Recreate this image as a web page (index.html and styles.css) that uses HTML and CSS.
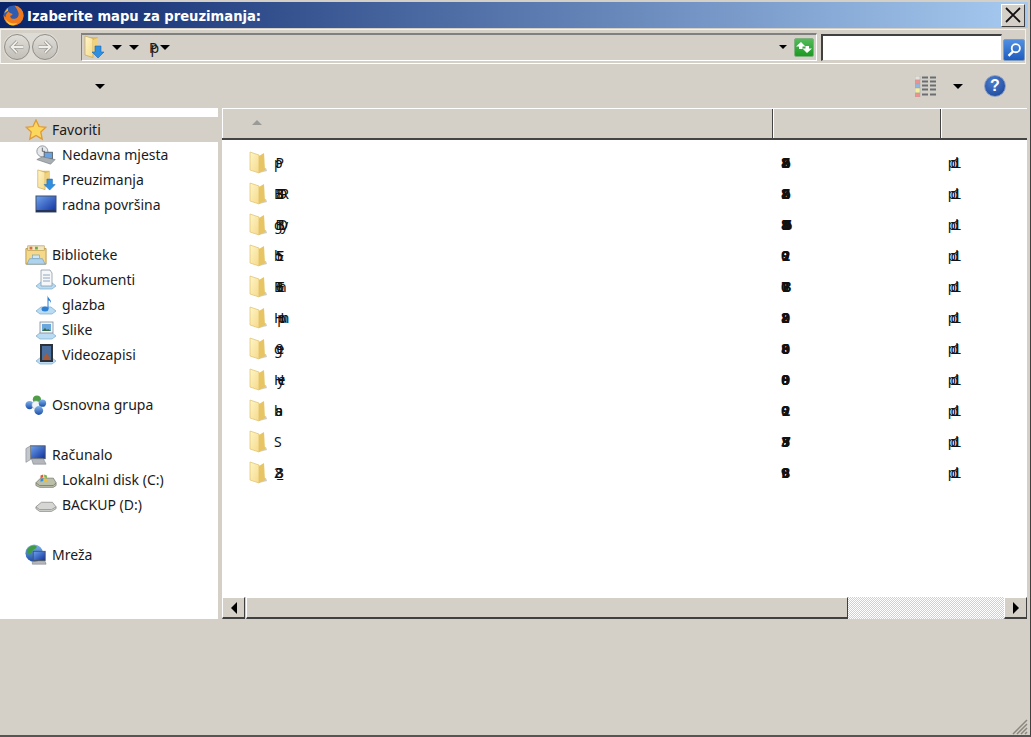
FILE: index.html
```html
<!DOCTYPE html>
<html lang="hr">
<head>
    <meta charset="UTF-8">
    <title>Izaberite mapu za preuzimanja:</title>
    <link rel="stylesheet" href="styles.css">
</head>
<body>
    <svg class="icon-defs" width="0" height="0">
        <defs>
            <linearGradient id="folderFront" x1="0" y1="0" x2="1" y2="1">
                <stop offset="0" stop-color="#fff6c8"/>
                <stop offset="1" stop-color="#f5d98a"/>
            </linearGradient>
            <linearGradient id="blueScreen" x1="0" y1="0" x2="1" y2="1">
                <stop offset="0" stop-color="#6fa4ee"/>
                <stop offset="1" stop-color="#0f2f9c"/>
            </linearGradient>
            <linearGradient id="sphereBlue" x1="0" y1="0" x2="0" y2="1">
                <stop offset="0" stop-color="#7fb4ec"/>
                <stop offset="1" stop-color="#1d4fa8"/>
            </linearGradient>
            <symbol id="folder" viewBox="0 0 20 24">
                <path d="M10 22l8-2-1-3-7 1z" fill="#b9b6ad" opacity=".7"/>
                <path d="M10 5l5-3 1 17-6 3z" fill="#e8c564"/>
                <path d="M1 1l9 3v18l-9-3z" fill="url(#folderFront)" stroke="#e0c06a" stroke-width=".7"/>
            </symbol>
            <symbol id="folderDown" viewBox="0 0 22 24">
                <path d="M4 2l11 0v16l-11 3z" fill="#e2bd5c"/>
                <path d="M2 1l8 2.500v19l-8-2.500z" fill="url(#folderFront)" stroke="#c9a650" stroke-width=".7"/>
                <path d="M10 5l5-2v14l-5 2z" fill="#f0d27e"/>
                <path d="M12 11h6v6h3l-6 6-6-6h3z" fill="#2f8fe0" stroke="#1c68b4" stroke-width=".6"/>
            </symbol>
            <symbol id="star" viewBox="0 0 24 24">
                <path d="M12 1l3.300 7.200 7.500.8-5.600 5.100 1.600 7.900-6.800-4-6.800 4 1.600-7.900-5.600-5.100 7.500-.8z" fill="#fbd75e" stroke="#e09a34" stroke-width="1.400"/>
            </symbol>
            <symbol id="recent" viewBox="0 0 24 22">
                <circle cx="8" cy="7" r="6" fill="#e6e8ea" stroke="#8d949b"/>
                <path d="M8 3v4h3" fill="none" stroke="#5b6168"/>
                <rect x="10" y="8" width="9" height="7" fill="#6aa3e2" stroke="#58606a"/>
                <path d="M2 16l6-3 14 3-5 5z" fill="#a9aeb3" stroke="#6e7378" stroke-width=".6"/>
            </symbol>
            <symbol id="desktop" viewBox="0 0 22 20">
                <rect x="1" y="1" width="20" height="16" fill="url(#blueScreen)" stroke="#3c5070"/>
                <rect x="1" y="15" width="20" height="2" fill="#27345a"/>
            </symbol>
            <symbol id="library" viewBox="0 0 24 22">
                <path d="M1 4h22v17h-22z" fill="#f5d989" stroke="#b7964a"/>
                <rect x="3" y="1" width="18" height="5" fill="#f0e6c0" stroke="#b7964a" stroke-width=".7"/>
                <rect x="5" y="2" width="3" height="3" fill="#d86a4a"/>
                <rect x="11" y="2" width="3" height="3" fill="#69a84f"/>
                <path d="M5 15h14l3 6h-20z" fill="#aed3ef" stroke="#6f9dc0" stroke-width=".7"/>
                <rect x="8" y="11" width="8" height="4" fill="#cfe6f7" stroke="#6f9dc0" stroke-width=".7"/>
            </symbol>
            <symbol id="docLib" viewBox="0 0 22 22">
                <path d="M1 17l5-4h10l5 4-4 3h-12z" fill="#b9dcf3" stroke="#7aa9cc" stroke-width=".7"/>
                <path d="M6 1h9l2 3v13h-11z" fill="#f6f7f9" stroke="#8e99a6" stroke-width=".8"/>
                <path d="M8 6h7M8 9h7M8 12h7" stroke="#8fa6bf" stroke-width="1"/>
            </symbol>
            <symbol id="musicLib" viewBox="0 0 22 22">
                <path d="M1 17l5-4h10l5 4-4 3h-12z" fill="#b9dcf3" stroke="#7aa9cc" stroke-width=".7"/>
                <ellipse cx="10" cy="15" rx="3.500" ry="2.500" fill="#2d7fd2"/>
                <path d="M12.500 15v-14c0 3 4 4 3.500 8-1-2-2-2.500-2.500-2.500v8.500z" fill="#2d7fd2"/>
            </symbol>
            <symbol id="picLib" viewBox="0 0 22 22">
                <path d="M1 17l5-4h10l5 4-4 3h-12z" fill="#b9dcf3" stroke="#7aa9cc" stroke-width=".7"/>
                <rect x="5" y="3" width="13" height="11" fill="#f2f5f8" stroke="#7f8c99" stroke-width=".8"/>
                <rect x="7" y="5" width="9" height="7" fill="#6aa7dc"/>
                <path d="M7 12l3-3 2 2 1-1 3 2z" fill="#3a6a45"/>
            </symbol>
            <symbol id="videoLib" viewBox="0 0 22 22">
                <path d="M1 17l5-4h10l5 4-4 3h-12z" fill="#b9dcf3" stroke="#7aa9cc" stroke-width=".7"/>
                <rect x="5" y="0" width="13" height="18" fill="#2d3238"/>
                <rect x="7" y="2" width="9" height="14" fill="#4b6f9e"/>
                <path d="M7 16l4.500-7 4.500 7z" fill="#a65a3a"/>
            </symbol>
            <symbol id="homegroup" viewBox="0 0 24 22">
                <circle cx="13" cy="5" r="4.500" fill="#4f9e46"/>
                <circle cx="5" cy="11" r="4.500" fill="url(#sphereBlue)"/>
                <circle cx="12" cy="11" r="4.500" fill="#eef3f7" stroke="#9db4c7" stroke-width=".6"/>
                <circle cx="19" cy="9" r="4" fill="url(#sphereBlue)"/>
                <circle cx="15" cy="17" r="4.800" fill="url(#sphereBlue)"/>
            </symbol>
            <symbol id="computer" viewBox="0 0 24 22">
                <rect x="6" y="1" width="16" height="14" fill="url(#blueScreen)" stroke="#4a5460"/>
                <path d="M1 4l5-3v15l-5 3z" fill="#c3c7cc" stroke="#777d84" stroke-width=".6"/>
                <path d="M7 15h13l3 6h-14z" fill="#b4b8bd" stroke="#777d84" stroke-width=".6"/>
            </symbol>
            <symbol id="diskC" viewBox="0 0 24 20">
                <path d="M1 13l5-5h14l3 5v3l-3 2h-15l-4-2z" fill="#bcc0a8" stroke="#6f7368" stroke-width=".8"/>
                <path d="M1 13l4 3h15l3-3" fill="none" stroke="#6f7368" stroke-width=".8"/>
                <path d="M6 5l3-1v3l-3 1z" fill="#e4572e"/>
                <path d="M10 4l3 1v3l-3-1z" fill="#7ab648"/>
                <path d="M6 9l3-1v3l-3 1z" fill="#2f8fe0"/>
                <path d="M10 8l3 1v3l-3-1z" fill="#f3c130"/>
            </symbol>
            <symbol id="diskD" viewBox="0 0 24 20">
                <path d="M1 12l6-5h12l4 5v2l-5 3h-13l-4-3z" fill="#d6d7d5" stroke="#85877f" stroke-width=".8"/>
                <path d="M1 12l4 3h13l5-3" fill="none" stroke="#85877f" stroke-width=".8"/>
            </symbol>
            <symbol id="network" viewBox="0 0 24 24">
                <circle cx="10" cy="10" r="9.500" fill="url(#sphereBlue)"/>
                <path d="M4 4c3-3 7-3 9-1-1 3-4 2-5 5s-3 4-5 3c-2-2-1-5 1-7z" fill="#3f9c44"/>
                <rect x="9" y="8" width="13" height="10" fill="url(#blueScreen)" stroke="#4b5560"/>
                <path d="M8 19h14l1 3h-15z" fill="#b4b8bd" stroke="#777d84" stroke-width=".6"/>
            </symbol>
        </defs>
    </svg>

    <div class="dialog">
        <header class="title-bar">
            <svg class="app-icon" viewBox="0 0 22 22">
                <circle cx="11" cy="11" r="10.500" fill="#2f5cb0"/>
                <path d="M12 .6a10.500 10.500 0 1 1-11.400 10c.6 1.200 1.200 1.800 2.200 2.200-.2-2.600 1-4.600 3.400-6 0 1.200 1.200 1.800 3.400 2.400.8.800-.2 1.800-2 2.200 0 2.400 2.200 3.400 4.800 3 3-.6 4.600-3.200 3.800-6.200-.8-3-2.800-5.800-4.200-7.600z" fill="#f0791c"/>
                <path d="M2.500 14c2 5 8 6.500 12.500 4.500-1.500 2-4 2.900-6 2.700-3-.3-5.700-3-6.500-7.200z" fill="#f9c233"/>
                <path d="M1.500 9c.8-3 2.400-5 4-6 -.4 1.200-.4 2-.2 3-1.600 1-3 1.800-3.800 3z" fill="#f9b030"/>
            </svg>
            <span class="title-text">Izaberite mapu za preuzimanja:</span>
            <button class="close-btn">
                <svg viewBox="0 0 16 16" width="16" height="16"><path d="M1 1l14 14M15 1l-14 14" stroke="#111" stroke-width="1.800"/></svg>
            </button>
        </header>

        <div class="address-row">
            <div class="nav-buttons">
                <span class="round-btn">
                    <svg viewBox="0 0 26 26"><path d="M20 13h-12M13 7l-6 6 6 6" fill="none" stroke="#8e8c86" stroke-width="3.400"/><path d="M20 13h-12M13 7l-6 6 6 6" fill="none" stroke="#efeee9" stroke-width="2"/></svg>
                </span>
                <span class="round-btn">
                    <svg viewBox="0 0 26 26"><path d="M6 13h12M13 7l6 6-6 6" fill="none" stroke="#8e8c86" stroke-width="3.400"/><path d="M6 13h12M13 7l6 6-6 6" fill="none" stroke="#efeee9" stroke-width="2"/></svg>
                </span>
            </div>
            <div class="breadcrumb">
                <svg class="crumb-icon"><use href="#folderDown"/></svg>
                <span class="arrow crumb-arrow-first"></span>
                <span class="arrow crumb-arrow"></span>
                <span class="crumb-text">Pp</span>
                <span class="arrow crumb-arrow-last"></span>
                <span class="arrow arrow-small crumb-drop"></span>
                <span class="refresh-btn">
                    <svg viewBox="0 0 18 17" width="18" height="17">
                        <path d="M6 3l-5 4.500h3v2.500h3.500v-2.500h3z" fill="#fff"/>
                        <path d="M12 14l5-4.500h-3v-2.500h-3.500v2.500h-3z" fill="#fff"/>
                    </svg>
                </span>
            </div>
            <div class="search-box">
                <div class="search-input"></div>
                <span class="search-btn">
                    <svg viewBox="0 0 22 22" width="22" height="22">
                        <circle cx="13" cy="9" r="4.500" fill="none" stroke="#fff" stroke-width="2"/>
                        <path d="M10 12.500l-5 5" stroke="#fff" stroke-width="2.600"/>
                    </svg>
                </span>
            </div>
        </div>

        <div class="tool-row">
            <span class="arrow tool-arrow"></span>
            <span class="view-icon">
                <svg viewBox="0 0 22 21" width="22" height="21">
                    <rect x="0" y="0" width="5" height="4" fill="#e4e2dc" stroke="#a8a6a0" stroke-width=".5"/>
                    <rect x="0" y="4" width="5" height="4" fill="#ef8f8f" stroke="#a8a6a0" stroke-width=".5"/>
                    <rect x="0" y="8" width="5" height="4" fill="#8fb6e6" stroke="#a8a6a0" stroke-width=".5"/>
                    <rect x="0" y="12" width="5" height="5" fill="#f3ef9a" stroke="#a8a6a0" stroke-width=".5"/>
                    <rect x="0" y="17" width="5" height="4" fill="#ef8f8f" stroke="#a8a6a0" stroke-width=".5"/>
                    <path d="M7 1.500h6M15 1.500h6M7 5.500h6M15 5.500h6M7 9.500h6M15 9.500h6M7 13.500h6M15 13.500h6M7 18.500h6M15 18.500h6" stroke="#6a6e72" stroke-width="2"/>
                </svg>
            </span>
            <span class="arrow view-arrow"></span>
            <span class="help-btn">?</span>
        </div>

        <main class="main-area">
            <nav class="side-nav">
                <div class="nav-row nav-row-active"><svg class="nav-icon"><use href="#star"/></svg>Favoriti</div>
                <div class="nav-row nav-child"><svg class="nav-icon"><use href="#recent"/></svg>Nedavna mjesta</div>
                <div class="nav-row nav-child"><svg class="nav-icon"><use href="#folderDown"/></svg>Preuzimanja</div>
                <div class="nav-row nav-child"><svg class="nav-icon"><use href="#desktop"/></svg>radna površina</div>
                <div class="nav-row"></div>
                <div class="nav-row"><svg class="nav-icon"><use href="#library"/></svg>Biblioteke</div>
                <div class="nav-row nav-child"><svg class="nav-icon"><use href="#docLib"/></svg>Dokumenti</div>
                <div class="nav-row nav-child"><svg class="nav-icon"><use href="#musicLib"/></svg>glazba</div>
                <div class="nav-row nav-child"><svg class="nav-icon"><use href="#picLib"/></svg>Slike</div>
                <div class="nav-row nav-child"><svg class="nav-icon"><use href="#videoLib"/></svg>Videozapisi</div>
                <div class="nav-row"></div>
                <div class="nav-row"><svg class="nav-icon"><use href="#homegroup"/></svg>Osnovna grupa</div>
                <div class="nav-row"></div>
                <div class="nav-row"><svg class="nav-icon"><use href="#computer"/></svg>Računalo</div>
                <div class="nav-row nav-child"><svg class="nav-icon"><use href="#diskC"/></svg>Lokalni disk (C:)</div>
                <div class="nav-row nav-child"><svg class="nav-icon"><use href="#diskD"/></svg>BACKUP (D:)</div>
                <div class="nav-row"></div>
                <div class="nav-row"><svg class="nav-icon"><use href="#network"/></svg>Mreža</div>
            </nav>

            <section class="file-pane">
                <div class="file-head">
                    <div class="head-cell head-name"><span class="sort-mark"></span></div>
                    <div class="head-cell head-date"></div>
                    <div class="head-cell head-type"></div>
                </div>
                <div class="file-list">
                    <div class="file-row">
                        <svg class="file-icon"><use href="#folder"/></svg>
                        <span class="col-name">pP</span>
                        <span class="col-date">8206</span>
                        <span class="col-type">pd1</span>
                    </div>
                    <div class="file-row">
                        <svg class="file-icon"><use href="#folder"/></svg>
                        <span class="col-name">B8DR</span>
                        <span class="col-date">8206</span>
                        <span class="col-type">pd1</span>
                    </div>
                    <div class="file-row">
                        <svg class="file-icon"><use href="#folder"/></svg>
                        <span class="col-name">gBDy</span>
                        <span class="col-date">8B06</span>
                        <span class="col-type">pd1</span>
                    </div>
                    <div class="file-row">
                        <svg class="file-icon"><use href="#folder"/></svg>
                        <span class="col-name">b5E</span>
                        <span class="col-date">092</span>
                        <span class="col-type">pd1</span>
                    </div>
                    <div class="file-row">
                        <svg class="file-icon"><use href="#folder"/></svg>
                        <span class="col-name">B6En</span>
                        <span class="col-date">07B</span>
                        <span class="col-type">pd1</span>
                    </div>
                    <div class="file-row">
                        <svg class="file-icon"><use href="#folder"/></svg>
                        <span class="col-name">Hpun</span>
                        <span class="col-date">820</span>
                        <span class="col-type">pd1</span>
                    </div>
                    <div class="file-row">
                        <svg class="file-icon"><use href="#folder"/></svg>
                        <span class="col-name">g9e</span>
                        <span class="col-date">860</span>
                        <span class="col-type">pd1</span>
                    </div>
                    <div class="file-row">
                        <svg class="file-icon"><use href="#folder"/></svg>
                        <span class="col-name">Hye</span>
                        <span class="col-date">089</span>
                        <span class="col-type">pd1</span>
                    </div>
                    <div class="file-row">
                        <svg class="file-icon"><use href="#folder"/></svg>
                        <span class="col-name">bsa</span>
                        <span class="col-date">092</span>
                        <span class="col-type">pd1</span>
                    </div>
                    <div class="file-row">
                        <svg class="file-icon"><use href="#folder"/></svg>
                        <span class="col-name">S</span>
                        <span class="col-date">3857</span>
                        <span class="col-type">pd1</span>
                    </div>
                    <div class="file-row">
                        <svg class="file-icon"><use href="#folder"/></svg>
                        <span class="col-name">283_</span>
                        <span class="col-date">908</span>
                        <span class="col-type">pd1</span>
                    </div>
                </div>
                <div class="h-scroll">
                    <span class="scroll-btn"><span class="tri-left"></span></span>
                    <span class="scroll-thumb"></span>
                    <span class="scroll-track"></span>
                    <span class="scroll-btn"><span class="tri-right"></span></span>
                </div>
            </section>
        </main>

        <footer class="dialog-foot">
            <svg class="grip" viewBox="0 0 18 18" width="18" height="18">
                <path d="M17 3l-14 14M17 7l-10 10M17 11l-6 6M17 15l-2 2" stroke="#8a8780" stroke-width="1.500"/>
            </svg>
        </footer>
    </div>
</body>
</html>
```

FILE: styles.css
```css
* {
    margin: 0;
    padding: 0;
    box-sizing: border-box;
}

body {
    font-family: "Noto Sans", "Open Sans", sans-serif;
    font-size: 14px;
    color: #1a1a1a;
    background-color: #d4d0c8;
    overflow: hidden;
}

.icon-defs {
    display: block;
    height: 0;
}

.dialog {
    width: 1031px;
    height: 737px;
    padding: 2px 2px 0 0;
    border-right: 1px solid #404040;
    border-bottom: 2px solid #555;
    display: flex;
    flex-direction: column;
}

/* title bar */
.title-bar {
    height: 26px;
    padding: 0 3px 0 3px;
    display: flex;
    align-items: center;
    background: linear-gradient(90deg, #0a246a, #a6caf0);
}

.app-icon {
    width: 21px;
    height: 21px;
}

.title-text {
    margin-left: 3px;
    flex: 1;
    font-family: "DejaVu Sans Condensed", "DejaVu Sans", sans-serif;
    font-stretch: condensed;
    font-size: 14.6px;
    font-weight: bold;
    color: white;
    white-space: nowrap;
}

.close-btn {
    width: 24px;
    height: 23px;
    display: flex;
    align-items: center;
    justify-content: center;
    background: #d4d0c8;
    border: 1px solid;
    border-color: #fff #404040 #404040 #fff;
}

/* address row */
.address-row {
    height: 35px;
    margin: 1px 2px 0 0;
    padding: 2px 0 2px 2px;
    display: flex;
    align-items: center;
    border: 1px solid #f2f0ea;
    border-bottom-color: #fff;
}

.nav-buttons {
    width: 56px;
    height: 28px;
    display: flex;
    gap: 2px;
    padding-left: 1px;
    border-radius: 14px;
    background: #dedbd4;
}

.round-btn {
    width: 26px;
    height: 26px;
    margin-top: 1px;
    border-radius: 50%;
    border: 1px solid #8f8d88;
    background: linear-gradient(#e0ded8, #c2bfb8);
}

.round-btn svg {
    display: block;
    width: 24px;
    height: 24px;
}

.breadcrumb {
    width: 737px;
    height: 28px;
    margin-left: 22px;
    display: flex;
    align-items: center;
    border: 1px solid;
    border-color: #808080 #fff #fff #808080;
    border-top-width: 2px;
}

.crumb-icon {
    width: 22px;
    height: 24px;
    margin-left: 1px;
}

.arrow {
    width: 0;
    height: 0;
    border-left: 5px solid transparent;
    border-right: 5px solid transparent;
    border-top: 5px solid #000;
}

.arrow-small {
    border-left-width: 4px;
    border-right-width: 4px;
    border-top-width: 4px;
}

.crumb-arrow-first {
    margin-left: 7px;
}

.crumb-arrow {
    margin-left: 7px;
}

.crumb-text {
    width: 8px;
    margin-left: 10px;
    font-size: 14px;
    letter-spacing: -7px;
}

.crumb-arrow-last {
    margin-left: 3px;
}

.crumb-drop {
    margin-left: auto;
}

.refresh-btn {
    width: 20px;
    height: 19px;
    margin: 0 2px 0 7px;
    border-radius: 2px;
    border: 1px solid #7fb27f;
    background: linear-gradient(#53bb5a, #1d9a24);
    display: flex;
    overflow: hidden;
}

.search-box {
    height: 28px;
    margin-left: 4px;
    display: flex;
    align-items: flex-end;
    flex: 1;
}

.search-input {
    width: 181px;
    height: 27px;
    background: white;
    border: 1px solid;
    border-color: #404040 #d4d0c8 #d4d0c8 #404040;
    border-top-width: 2px;
    border-left-width: 2px;
}

.search-btn {
    width: 22px;
    height: 22px;
    margin-left: 1px;
    border: 1px solid #7d9cc0;
    border-radius: 2px;
    background: linear-gradient(#4f8fe0, #1f5cc0);
}

.search-btn svg {
    display: block;
    width: 20px;
    height: 20px;
}

/* toolbar */
.tool-row {
    height: 44px;
    display: flex;
    align-items: center;
}

.tool-arrow {
    margin-left: 95px;
}

.view-icon {
    height: 21px;
    margin-left: auto;
}

.view-arrow {
    margin-left: 16px;
}

.help-btn {
    width: 22px;
    height: 22px;
    margin: 0 22px 0 21px;
    border-radius: 50%;
    border: 1px solid #8aa0c4;
    background: radial-gradient(circle at 40% 30%, #4b7fd0, #173f92);
    color: white;
    font-family: "Liberation Sans", sans-serif;
    font-weight: bold;
    font-size: 16px;
    line-height: 20px;
    text-align: center;
}

/* main */
.main-area {
    height: 511px;
    display: flex;
}

.side-nav {
    width: 218px;
    padding-top: 9px;
    background: white;
}

.nav-row {
    height: 25px;
    padding-left: 25px;
    display: flex;
    align-items: center;
    white-space: nowrap;
    overflow: hidden;
}

.nav-child {
    padding-left: 35px;
}

.nav-row-active {
    background-color: #d4d0c8;
}

.nav-icon {
    width: 22px;
    height: 22px;
    margin-right: 5px;
    flex-shrink: 0;
}

.file-pane {
    width: 805px;
    margin-left: 4px;
    display: flex;
    flex-direction: column;
    background: white;
}

.file-head {
    height: 32px;
    display: flex;
    background: #d4d0c8;
    border-top: 1px solid #fff;
    border-bottom: 2px solid #444;
}

.head-cell {
    height: 100%;
    border-left: 1px solid #fff;
    border-right: 1px solid #444;
}

.head-name {
    width: 551px;
    padding: 11px 0 0 29px;
}

.head-date {
    width: 168px;
}

.head-type {
    flex: 1;
    border-right: none;
}

.sort-mark {
    display: block;
    width: 0;
    height: 0;
    border-left: 5px solid transparent;
    border-right: 5px solid transparent;
    border-bottom: 5px solid #9a9a96;
}

.file-list {
    flex: 1;
    padding-top: 7px;
}

.file-row {
    height: 31px;
    padding-left: 27px;
    display: flex;
    align-items: center;
    font-size: 14px;
    color: #111;
}

.file-icon {
    width: 20px;
    height: 24px;
    flex-shrink: 0;
}

/* garbled labels: the letters run over each other */
.col-name {
    width: 507px;
    margin-left: 5px;
    letter-spacing: -7px;
}

.col-date {
    width: 167px;
    font-weight: bold;
    letter-spacing: -7.4px;
}

.col-type {
    width: 60px;
    font-family: "Liberation Sans", sans-serif;
    letter-spacing: -5px;
}

/* horizontal scrollbar */
.h-scroll {
    height: 22px;
    display: flex;
    background: #d4d0c8;
}

.scroll-btn {
    width: 23px;
    display: flex;
    align-items: center;
    justify-content: center;
    border: 1px solid;
    border-color: #fff #404040 #404040 #fff;
    border-bottom-width: 2px;
}

.tri-left {
    border-top: 6px solid transparent;
    border-bottom: 6px solid transparent;
    border-right: 6px solid #000;
}

.tri-right {
    border-top: 6px solid transparent;
    border-bottom: 6px solid transparent;
    border-left: 6px solid #000;
}

.scroll-thumb {
    width: 602px;
    margin-left: 1px;
    border: 1px solid;
    border-color: #fff #404040 #404040 #fff;
    border-bottom-width: 2px;
}

.scroll-track {
    flex: 1;
    background: repeating-conic-gradient(#fff 0 25%, #d4d0c8 0 50%) 0 0 / 2px 2px;
}

.dialog-foot {
    flex: 1;
    display: flex;
    justify-content: flex-end;
    align-items: flex-end;
}

.grip {
    margin-right: 0;
}
```
